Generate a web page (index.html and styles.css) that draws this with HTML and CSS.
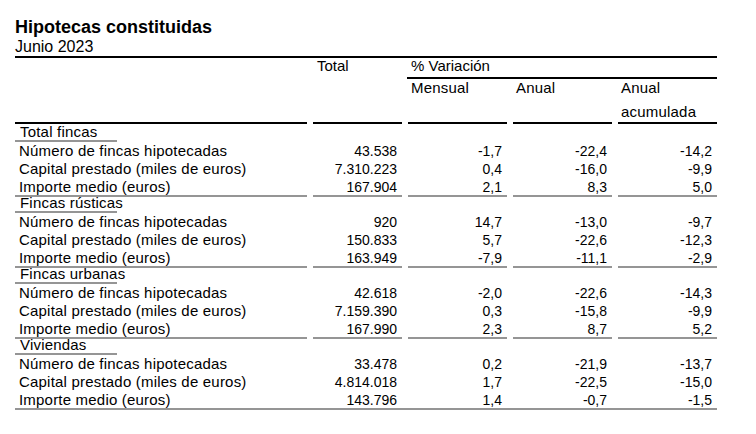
FILE: index.html
```html
<!DOCTYPE html>
<html lang="es">
<head>
<meta charset="utf-8">
<title>Hipotecas constituidas</title>
<link rel="stylesheet" href="styles.css">
</head>
<body>
<div class="report">
  <h1 class="title">Hipotecas constituidas</h1>
  <div class="subtitle">Junio 2023</div>
  <div class="table">
    <div class="thead">
      <div class="h-blank"></div>
      <div class="h-total">Total</div>
      <div class="h-var">% Variación</div>
      <div class="h-sub">Mensual</div>
      <div class="h-sub">Anual</div>
      <div class="h-sub h-stack"><span>Anual</span><span>acumulada</span></div>
    </div>

    <section class="group group-first">
      <div class="group-head">Total fincas</div>
      <div class="row"><div class="lab">Número de fincas hipotecadas</div><div class="num">43.538</div><div class="num">-1,7</div><div class="num">-22,4</div><div class="num">-14,2</div></div>
      <div class="row"><div class="lab">Capital prestado (miles de euros)</div><div class="num">7.310.223</div><div class="num">0,4</div><div class="num">-16,0</div><div class="num">-9,9</div></div>
      <div class="row last"><div class="lab">Importe medio (euros)</div><div class="num">167.904</div><div class="num">2,1</div><div class="num">8,3</div><div class="num">5,0</div></div>
    </section>

    <section class="group">
      <div class="group-head">Fincas rústicas</div>
      <div class="row"><div class="lab">Número de fincas hipotecadas</div><div class="num">920</div><div class="num">14,7</div><div class="num">-13,0</div><div class="num">-9,7</div></div>
      <div class="row"><div class="lab">Capital prestado (miles de euros)</div><div class="num">150.833</div><div class="num">5,7</div><div class="num">-22,6</div><div class="num">-12,3</div></div>
      <div class="row last"><div class="lab">Importe medio (euros)</div><div class="num">163.949</div><div class="num">-7,9</div><div class="num">-11,1</div><div class="num">-2,9</div></div>
    </section>

    <section class="group">
      <div class="group-head">Fincas urbanas</div>
      <div class="row"><div class="lab">Número de fincas hipotecadas</div><div class="num">42.618</div><div class="num">-2,0</div><div class="num">-22,6</div><div class="num">-14,3</div></div>
      <div class="row"><div class="lab">Capital prestado (miles de euros)</div><div class="num">7.159.390</div><div class="num">0,3</div><div class="num">-15,8</div><div class="num">-9,9</div></div>
      <div class="row last"><div class="lab">Importe medio (euros)</div><div class="num">167.990</div><div class="num">2,3</div><div class="num">8,7</div><div class="num">5,2</div></div>
    </section>

    <section class="group group-final">
      <div class="group-head">Viviendas</div>
      <div class="row"><div class="lab">Número de fincas hipotecadas</div><div class="num">33.478</div><div class="num">0,2</div><div class="num">-21,9</div><div class="num">-13,7</div></div>
      <div class="row"><div class="lab">Capital prestado (miles de euros)</div><div class="num">4.814.018</div><div class="num">1,7</div><div class="num">-22,5</div><div class="num">-15,0</div></div>
      <div class="row last-final"><div class="lab">Importe medio (euros)</div><div class="num">143.796</div><div class="num">1,4</div><div class="num">-0,7</div><div class="num">-1,5</div></div>
    </section>
  </div>
</div>
</body>
</html>
```

FILE: styles.css
```css
html, body {
  margin: 0;
  padding: 0;
  background: #ffffff;
}

body {
  font-family: "Liberation Sans", Arial, sans-serif;
  color: #000000;
}

.report {
  padding: 17px 0 0 15px;
  width: 702px;
}

.title {
  margin: 0;
  font-size: 18px;
  font-weight: bold;
  line-height: 20px;
}

.subtitle {
  font-size: 16px;
  line-height: 19px;
}

.table {
  border-top: 2px solid #000000;
  width: 702px;
}

.thead {
  display: grid;
  grid-template-columns: 292px 89px 99px 99px 99px;
  grid-template-rows: 21px 45px;
  column-gap: 6px;
  font-size: 15px;
}

.thead > div {
  box-sizing: border-box;
  border-bottom: 2px solid #000000;
}

.h-blank {
  grid-column: 1;
  grid-row: 1 / 3;
}

.h-total {
  grid-column: 2;
  grid-row: 1 / 3;
  padding-left: 4px;
  line-height: 16px;
}

.h-var {
  grid-column: 3 / 6;
  grid-row: 1;
  padding-left: 4px;
  line-height: 16px;
  margin-left: -1px;
}

.h-sub {
  grid-row: 2;
  padding-left: 3px;
  line-height: 18px;
  letter-spacing: 0.2px;
}

.h-stack {
  display: flex;
  flex-direction: column;
  gap: 6px;
}

.group-first {
  padding-top: 2px;
}

.group-head {
  box-sizing: border-box;
  width: 102px;
  height: 16px;
  padding-left: 5px;
  font-size: 15px;
  line-height: 12px;
  letter-spacing: 0.2px;
  white-space: nowrap;
  border-bottom: 2px solid #959595;
}

.row {
  display: grid;
  grid-template-columns: 292px 89px 99px 99px 99px;
  column-gap: 6px;
}

.row > div {
  height: 18px;
  line-height: 18px;
  white-space: nowrap;
}

.row.last > div,
.row.last-final > div {
  height: 17px;
}

.row.last > div {
  border-bottom: 2px solid #959595;
}

.group-final {
  border-bottom: 2px solid #959595;
}

.lab {
  padding-left: 4px;
  font-size: 15px;
  letter-spacing: 0.2px;
}

.num {
  text-align: right;
  padding-right: 5px;
  font-size: 14px;
}
```
